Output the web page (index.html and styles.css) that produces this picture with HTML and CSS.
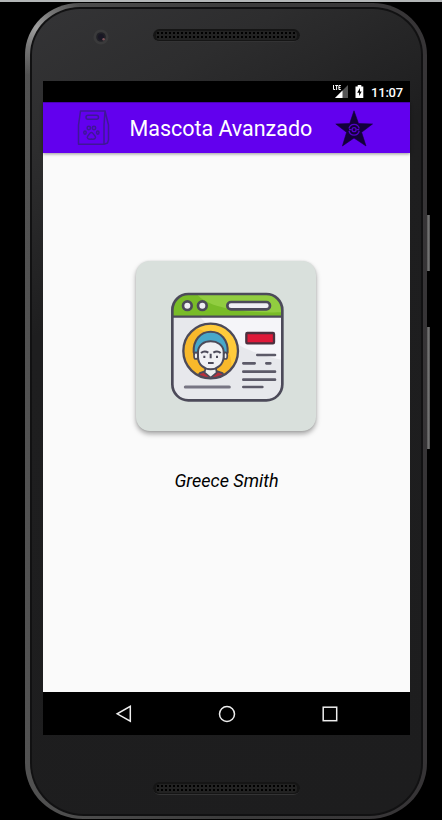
FILE: index.html
```html
<!DOCTYPE html>
<html lang="es">
<head>
<meta charset="utf-8">
<title>Mascota Avanzado</title>
<link rel="stylesheet" href="styles.css">
</head>
<body>
<div class="stage">
  <div class="phone">
    <span class="key key-power"></span>
    <span class="key key-volume"></span>
    <div class="gap-ring">
      <div class="shell">
        <header class="forehead">
          <svg class="camera" viewBox="0 0 16 16">
            <circle cx="8" cy="8" r="7.6" fill="#3a3a3b"/>
            <circle cx="8" cy="8" r="4.8" fill="#202026"/>
            <circle cx="8" cy="8" r="3" fill="#191724"/>
            <circle cx="10.6" cy="10.2" r="1.2" fill="#80545b"/>
          </svg>
          <div class="speaker"><div class="mesh"></div></div>
        </header>
        <main class="screen">
          <div class="status">
            <svg class="signal" viewBox="0 0 17 15">
              <path d="M16 1V14H3z" fill="#555"/>
              <path d="M10.5 6.5V14H3z" fill="#fff"/>
              <path d="M0 0H9V7H0z" fill="#000"/>
              <path d="M1.5 1V5.5H3.2M3.2 1.5H6M4.6 1.5V6M8.8 1.5H6.9V5.5H8.8M6.9 3.5H8.5" fill="none" stroke="#fff" stroke-width="1"/>
            </svg>
            <svg class="battery" viewBox="0 0 9 13">
              <path d="M2.7 0H6.3V1.4H8.3V13H.5V1.4H2.7z" fill="#fff"/>
              <path d="M5 3L2.2 7.8H4.1V11L6.7 6.4H5z" fill="#000"/>
            </svg>
            <span class="clock">11:07</span>
          </div>
          <div class="appbar">
            <svg class="bag" viewBox="0 0 34 36" fill="none" stroke="#3f1796" stroke-width="1.5" stroke-linejoin="round">
              <path d="M3.5 1H28L27 15V34.3H1.5V15zM28 1L31.5 15V30L30.5 33L27 34.3"/>
              <rect x="9" y="5.2" width="12.5" height="4" rx="2"/>
              <circle cx="11.8" cy="18" r="1.7"/>
              <circle cx="17" cy="18" r="1.7"/>
              <ellipse cx="8" cy="22.6" rx="1.2" ry="1.6"/>
              <ellipse cx="20.8" cy="22.6" rx="1.2" ry="1.6"/>
              <path d="M14.4 22.6C12.8 22.6 12.3 24.5 10.8 26C9.4 28 11 29.7 14.4 29C17.8 29.7 19.4 28 18 26C16.5 24.5 16 22.6 14.4 22.6z"/>
            </svg>
            <h1 class="title">Mascota Avanzado</h1>
            <svg class="star" viewBox="0 0 38 37">
              <path d="M19 .8L23.5 13.5L37.5 14L26.6 22.3L31 36L19 28L7.4 36L11.6 22.3L.8 14L14.7 13.5z" fill="#13003a" stroke="#13003a" stroke-width=".6" stroke-linejoin="round"/>
              <g fill="none" stroke="#5200c8" stroke-width="1.3">
                <path d="M14 18.5A5.2 5.2 0 0 1 24.2 18.5M14 20.9A5.2 5.2 0 0 0 24.2 20.9M14 19.7H16.6M21.6 19.7H24.2"/>
                <circle cx="19.1" cy="19.7" r="2"/>
              </g>
            </svg>
          </div>
          <section class="content">
            <div class="card">
              <svg class="profile" viewBox="0 0 375 360">
                <defs>
                  <clipPath id="win"><rect x="22" y="27" width="330" height="319" rx="48"/></clipPath>
                  <clipPath id="disc"><circle cx="137" cy="198" r="80"/></clipPath>
                </defs>
                <g clip-path="url(#win)">
                  <path d="M22 27H352V346H22z" fill="#e7e8ec"/>
                  <path d="M105 95H352V225C250 205 150 150 105 95z" fill="#f5f5f9"/>
                  <path d="M22 27H352V95H22z" fill="#79bc28"/>
                  <path d="M95 27H352V82C250 85 130 72 95 27z" fill="#91cd40"/>
                  <path d="M22 95H352" stroke="#4c4a59" stroke-width="7"/>
                </g>
                <rect x="22" y="27" width="330" height="319" rx="48" fill="none" stroke="#4c4a59" stroke-width="8"/>
                <g fill="#eeeef3" stroke="#4c4a59" stroke-width="8">
                  <circle cx="67" cy="62" r="13"/>
                  <circle cx="112" cy="62" r="13"/>
                  <rect x="187" y="51" width="128" height="22" rx="11"/>
                </g>
                <circle cx="137" cy="198" r="82" fill="#f8b82b"/>
                <path d="M92 130A82 82 0 0 1 199 251C205 195 165 150 92 130z" fill="#ffcb3b"/>
                <g clip-path="url(#disc)">
                  <path d="M85 290L105 264L125 257H151L172 264L190 290z" fill="#b92f3c" stroke="#4c4a59" stroke-width="6"/>
                  <path d="M122 245L119 263L137 278L155 263L152 245z" fill="#eee" stroke="#4c4a59" stroke-width="5"/>
                </g>
                <path d="M86 202C84 166 106 140 137 140S190 166 188 202L181 218H93z" fill="#48a8c9" stroke="#4c4a59" stroke-width="6"/>
                <ellipse cx="93" cy="212" rx="6" ry="10" fill="#eee" stroke="#4c4a59" stroke-width="5"/>
                <ellipse cx="181" cy="212" rx="6" ry="10" fill="#eee" stroke="#4c4a59" stroke-width="5"/>
                <path d="M99 200C100 180 117 169 137 169S175 180 176 200V215C175 239 156 253 137 253S99 239 99 215z" fill="#f0f0f3" stroke="#4c4a59" stroke-width="6"/>
                <path d="M108 204Q118 195 130 203M145 203Q157 195 167 204M118 212V219M156 212V219M137 206V220M129 234H146" fill="none" stroke="#4c4a59" stroke-width="6"/>
                <circle cx="137" cy="198" r="82" fill="none" stroke="#4c4a59" stroke-width="7"/>
                <rect x="244" y="144" width="83" height="31" rx="3" fill="#df1939" stroke="#4c303f" stroke-width="7"/>
                <path d="M277 210H330M235 235H269M304 235H316M235 260H330M235 284H330M235 306H292" fill="none" stroke="#5c5a68" stroke-width="8" stroke-linecap="round"/>
                <path d="M61 306H193" stroke="#777583" stroke-width="9" stroke-linecap="round"/>
              </svg>
            </div>
            <p class="name">Greece Smith</p>
          </section>
          <nav class="navbar">
            <svg viewBox="0 0 18 18"><path d="M15.3 1.3V16.2L2.2 8.8z"/></svg>
            <svg viewBox="0 0 18 18"><circle cx="9" cy="9" r="7.5"/></svg>
            <svg viewBox="0 0 18 18"><rect x="2.2" y="2.2" width="13.5" height="13.5"/></svg>
          </nav>
        </main>
        <footer class="chin"><div class="speaker"><div class="mesh"></div></div></footer>
      </div>
    </div>
  </div>
</div>
</body>
</html>
```
FILE: styles.css
```css
* {
  box-sizing: border-box;
}

body {
  margin: 0;
  background: #000;
  font-family: Roboto, sans-serif;
}

svg {
  display: block;
  flex: none;
}

.stage {
  height: 820px;
  border-top: 2px solid #b3b6b7;
  padding: 1px 15px 0 25px;
  overflow: hidden;
}

.phone {
  position: relative;
  height: 816px;
  padding: 4px 4px 3px 5px;
  border-radius: 54px 54px 58px 58px / 52px 52px 56px 56px;
  background: radial-gradient(circle at 12px 25px, #a0a0a0 0, #777 20px, transparent 48px), linear-gradient(90deg, #525252 0, #3c3c3c 50%, #363436 100%);
}

.gap-ring {
  height: 100%;
  padding: 2px;
  border-radius: 50px 50px 54px 54px / 48px 48px 53px 53px;
  background: #111112;
}

.shell {
  height: 100%;
  padding: 0 11px;
  display: grid;
  grid-template-rows: 72px 654px 1fr;
  border-radius: 48px 48px 52px 52px / 46px 46px 51px 51px;
  background: linear-gradient(150deg, #343436 0, #2d2d2e 14%, #1e1e1f 32%, #1d1d1e 100%);
}

.forehead {
  display: flex;
  align-items: flex-start;
  padding: 20px 0 0 50px;
}

.camera {
  width: 16px;
  height: 16px;
}

.speaker {
  width: 147px;
  height: 13px;
  padding: 2px 3px;
  border-radius: 7px;
  background: #151515;
  border-bottom: 1px solid #333334;
}

.forehead .speaker {
  margin-left: 44px;
}

.mesh {
  height: 9px;
  border-radius: 4px;
  background: radial-gradient(circle, #000 0.9px, #222 1.5px) 0 0 / 4px 4px;
}

.screen {
  display: grid;
  grid-template-rows: 21px 51px 539px 43px;
  background: #fafafa;
}

.status {
  display: flex;
  justify-content: flex-end;
  align-items: center;
  padding-right: 7px;
  background: #000;
  color: #fff;
}

.signal {
  width: 17px;
  height: 15px;
}

.battery {
  width: 9px;
  height: 13px;
  margin: 0 7px 0 6px;
}

.clock {
  font-size: 13px;
  font-weight: 500;
  letter-spacing: -0.2px;
  line-height: 21px;
  padding-top: 1px;
  width: 32px;
  white-space: nowrap;
}

.appbar {
  z-index: 1;
  display: flex;
  align-items: center;
  padding-left: 34px;
  background: #6200ee;
  border-top: 1px solid #4a00b5;
  box-shadow: 0 1px 3px rgba(0, 0, 0, 0.4);
}

.bag {
  width: 34px;
  height: 36px;
}

.title {
  margin: 2px 0 0 18.5px;
  width: 205.5px;
  font-size: 21.5px;
  font-weight: 400;
  letter-spacing: -0.03px;
  line-height: 28px;
  white-space: nowrap;
  color: #fff;
}

.star {
  width: 38px;
  height: 37px;
}

.content {
  display: flex;
  flex-direction: column;
  align-items: center;
  padding-top: 108px;
}

.card {
  width: 180px;
  height: 170px;
  margin-right: 1px;
  padding: 24px 0 0 29px;
  border-radius: 14px;
  background: #d9e0dc;
  box-shadow: 0 3px 5px rgba(0, 0, 0, 0.34), 0 0 2px rgba(0, 0, 0, 0.12);
}

.profile {
  width: 125px;
  height: 120px;
  filter: blur(0.6px);
}

.name {
  margin: 39px 0 0;
  font-size: 18px;
  font-style: italic;
  line-height: 22px;
  color: #000;
}

.navbar {
  display: flex;
  justify-content: center;
  align-items: center;
  gap: 85px;
  background: #000;
}

.navbar svg {
  width: 18px;
  height: 18px;
  fill: none;
  stroke: #eee;
  stroke-width: 1.5;
}

.chin {
  display: flex;
  justify-content: center;
  padding-top: 47px;
}

.key {
  position: absolute;
  right: -3px;
  width: 3px;
  background: linear-gradient(90deg, #555, #777 60%, #444);
}

.key-power {
  top: 212px;
  height: 56px;
}

.key-volume {
  top: 324px;
  height: 122px;
}
```
